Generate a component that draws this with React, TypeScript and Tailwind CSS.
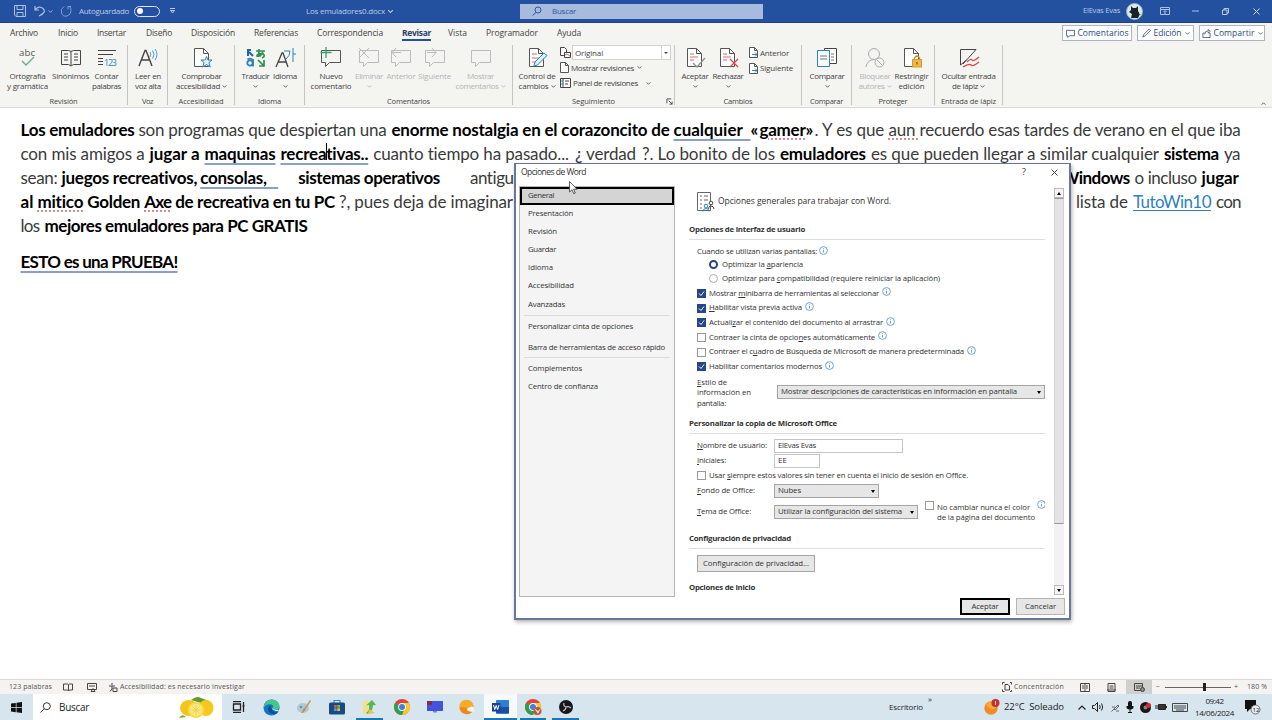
import React, { useLayoutEffect, useRef } from 'react';

interface FitProps {
  w: number;
  className?: string;
  children: React.ReactNode;
}

// Spreads or tightens the letters so the label takes exactly `w` pixels
const Fit: React.FC<FitProps> = ({ w, className = '', children }) => {
  const ref = useRef<HTMLSpanElement>(null);

  useLayoutEffect(() => {
    const el = ref.current;
    if (!el) return;
    el.style.letterSpacing = '0px';
    const natural = el.getBoundingClientRect().width;
    const count = (el.textContent || '').length;
    if (count > 0) el.style.letterSpacing = `${(w - natural) / count}px`;
  }, [w, children]);

  return (
    <span ref={ref} className={`inline-block whitespace-pre shrink-0 ${className}`}>
      {children}
    </span>
  );
};

// "&x" underlines the access key
const Mnemonic: React.FC<{ text: string; w: number; className?: string }> = ({ text, w, className }) => {
  const i = text.indexOf('&');
  return (
    <Fit w={w} className={className}>
      {i < 0 ? text : <>{text.slice(0, i)}<u>{text[i + 1]}</u>{text.slice(i + 2)}</>}
    </Fit>
  );
};

const Chevron: React.FC<{ className?: string }> = ({ className = '' }) => (
  <svg viewBox="0 0 6 4" className={`w-[5px] h-[3px] shrink-0 ${className}`} fill="none" stroke="currentColor" strokeWidth="1.1">
    <path d="M.5.5 3 3 5.500.5" />
  </svg>
);

const Svg: React.FC<{ children: React.ReactNode; className?: string; box?: string }> = ({ children, className = 'w-[22px] h-[22px]', box = '0 0 22 22' }) => (
  <svg viewBox={box} className={`shrink-0 ${className}`} fill="none" stroke="#444" strokeWidth="1">{children}</svg>
);

const Bubble = ({ stroke = '#555' }) => <path d="M1.500 3.500h19v12h-11l-4 4v-4h-4z" stroke={stroke} />;
const Page = () => <path d="M3.500 1.500h9l5 5v13h-14zM12.500 1.500v5h5" stroke="#555" fill="#fff" />;

const ICONS: Record<string, React.ReactNode> = {
  abc: (
    <Svg>
      <text x="2" y="9" fontSize="9.500" fill="#555" stroke="none" fontFamily="Open Sans" textLength="16">abc</text>
      <path d="M5 14l4 4 8-8" stroke="#5fae8d" strokeWidth="1.300" />
    </Svg>
  ),
  book: (
    <Svg>
      <path d="M1.500 3.500h7l2.500 1 2.500-1h7v14h-7l-2.500 1.500-2.500-1.500h-7zM11 4.500v14M4 7h4M4 10h4M4 13h4M14 7h4M14 10h4M14 13h4" />
    </Svg>
  ),
  count: (
    <Svg>
      <path d="M2 3.500h18M2 7.500h15M2 11.500h5M2 14.500h5M2 17.500h5" />
      <text x="8" y="19" fontSize="9" fill="#2b83b8" stroke="none" fontFamily="Open Sans" textLength="13">123</text>
    </Svg>
  ),
  read: (
    <Svg>
      <path d="M2 19 8 3.500h1L15 19M4.500 13h8" strokeWidth="1.400" />
      <path d="M13 5q1.500 2.500 0 5M15.500 3.500q3 4 0 8M18 2q4 5.500 0 11" stroke="#4a9bd0" />
    </Svg>
  ),
  check: (
    <Svg>
      <Page />
      <path d="m15.500 9.500 1.500 3.500h4l-3 2.500 1.200 4.500-3.700-2.500-3.700 2.500 1.200-4.500-3-2.500h4z" stroke="#2b83b8" fill="#dff0fa" />
    </Svg>
  ),
  translate: (
    <Svg>
      <circle cx="5" cy="16" r="2.700" stroke="#2b83b8" strokeWidth="1.800" />
      <path d="M8 12v7.500M2.500 12.500Q5 10.500 8 13" stroke="#2b83b8" strokeWidth="1.800" />
      <path d="M3 9V3h3M8 9 4 5" stroke="#1d65b0" strokeWidth="2" />
      <path d="M11 4h9M14 2q-1 7 2 7M18 5q-3 5-6 4 0-3 6-2 3 2-1 4M13 13l6 6M19 13v6h-5" stroke="#2a9150" strokeWidth="1.700" />
    </Svg>
  ),
  lang: (
    <Svg>
      <path d="M2 20 8 6h1L14 20M4 15h8" strokeWidth="1.300" />
      <path d="M10 4h6q0 5-4 8M19 1v14M19 7h3" stroke="#2b83b8" />
    </Svg>
  ),
  newComment: (
    <Svg><Bubble /><path d="M6 0v11M.5 5.500h11" stroke="#37a06b" strokeWidth="1.300" /></Svg>
  ),
  delComment: (
    <Svg><Bubble stroke="#bbb" /><path d="M1 1l10 10M11 1 1 11" stroke="#bbb" /></Svg>
  ),
  prevComment: (
    <Svg><Bubble stroke="#bbb" /><path d="M6 1 2 5.500 6 10M2 5.500h9" stroke="#bbb" /></Svg>
  ),
  nextComment: (
    <Svg><Bubble stroke="#bbb" /><path d="M8 1l4 4.500L8 10M12 5.500H3" stroke="#bbb" /></Svg>
  ),
  showComment: <Svg><Bubble stroke="#bbb" /></Svg>,
  track: (
    <Svg>
      <Page />
      <path d="M6 7h5M6 11h8M6 15h4" stroke="#d66a6a" />
      <path d="m8 19 1-4L18 6l3 2.500-9.500 9.500z" fill="#d8eefb" stroke="#2b83b8" />
    </Svg>
  ),
  accept: (
    <Svg><Page /><path d="M6 7h4M6 10h8M6 13h4" stroke="#d66a6a" /><path d="m9 16 4 4 8-9" stroke="#8c9a93" strokeWidth="1.500" /></Svg>
  ),
  reject: (
    <Svg><Page /><path d="M6 7h4M6 10h8M6 13h4" stroke="#d66a6a" /><path d="m13 12 8 8M21 12l-8 8" stroke="#d9444d" strokeWidth="1.200" /></Svg>
  ),
  compare: (
    <Svg>
      <path d="M8.500 1.500h12v15h-12z" fill="#fff" />
      <path d="M1.500 3.500h12v16h-12z" fill="#f5fbff" stroke="#2b83b8" />
      <path d="M4 9h7M4 12h7M15 7h3M15 10h3M15 13h3" stroke="#777" />
    </Svg>
  ),
  block: (
    <Svg>
      <circle cx="10" cy="7" r="5.500" stroke="#aaa" />
      <path d="M2 20q1-7 8-7.500" stroke="#aaa" />
      <circle cx="15.500" cy="15.500" r="4.500" fill="#f4f4f1" stroke="#aaa" /><path d="m12.500 12.500 6 6" stroke="#aaa" />
    </Svg>
  ),
  restrict: (
    <Svg>
      <Page />
      <path d="M13.500 13v-2q2.500-4 5 0v2" stroke="#b98a2e" strokeWidth="1.300" />
      <rect x="11.500" y="12.500" width="9" height="7.500" fill="#f6b73c" stroke="#d69a33" /><path d="M16 15v2.500" />
    </Svg>
  ),
  ink: (
    <Svg>
      <path d="M2.500 18V2.500H18L5 17M2.500 18l6-5" stroke="#444" />
      <path d="M9 15q4-4 5-2t7-3M5 20q6-4 8-2t8-3" stroke="#d9444d" strokeWidth="1.200" />
    </Svg>
  ),
};

interface BigProps {
  icon: string;
  box: string;
  l1: [string, number];
  l2?: [string, number];
  arrow?: boolean;
  off?: boolean;
}

const Big: React.FC<BigProps> = ({ icon, box, l1, l2, arrow, off }) => (
  <div className={`flex flex-col items-center shrink-0 pt-[2px] ${box} ${off ? 'text-[#b4b4b2]' : 'text-[#444]'}`}>
    {ICONS[icon]}
    <div className="h-[11px] mt-[1px] leading-[11px] flex justify-center"><Fit w={l1[1]}>{l1[0]}</Fit></div>
    <div className="h-[10px] leading-[10px] flex items-center justify-center gap-[2px]">
      {l2 && <Fit w={l2[1]}>{l2[0]}</Fit>}
      {arrow && <Chevron />}
    </div>
  </div>
);

const Group: React.FC<{ box: string; name: string; w: number; children: React.ReactNode; launcher?: boolean }> = ({ box, name, w, children, launcher }) => (
  <div className={`flex flex-col shrink-0 h-[60px] border-r border-[#c4c4c2] ${box}`}>
    <div className="flex h-[51px] shrink-0">{children}</div>
    <div className="relative h-[11px] shrink-0 flex justify-center leading-[11px] text-[7.5px] text-[#444] font-medium">
      <Fit w={w}>{name}</Fit>
      {launcher && (
        <Svg className="absolute right-[1px] top-[2px] w-[7px] h-[7px]" box="0 0 8 8"><path d="M1 6V1h5M3 3l4 4M7 4v3H4" /></Svg>
      )}
    </div>
  </div>
);

const TABS: [string, string, number][] = [
  ['Archivo', 'w-[48px]', 28], ['Inicio', 'w-[39px]', 20], ['Insertar', 'w-[49px]', 29], ['Diseño', 'w-[45px]', 26],
  ['Disposición', 'w-[63px]', 44], ['Referencias', 'w-[63px]', 44], ['Correspondencia', 'w-[85px]', 66], ['Revisar', 'w-[46px]', 29],
  ['Vista', 'w-[38px]', 19], ['Programador', 'w-[71px]', 52], ['Ayuda', 'w-[40px]', 24],
];

const TitleBar = () => (
  <div className="h-[23px] bg-[#2450a0] border-b border-[#1d4384] flex items-center text-[#b9cbea] text-[8px]">
    <Svg className="w-[12px] h-[12px] ml-[14px]" box="0 0 12 12"><path d="M.5.500h11v11H2L.5 10zM3 .5v4h6v-4M3 11V7.500h6V11" stroke="#a9c0e8" /></Svg>
    <Svg className="w-[11px] h-[12px] ml-[8px]" box="0 0 11 12"><path d="M1 1v4h4M1 5q4-5 8-1.500T5 11" stroke="#a9c0e8" strokeWidth="1.200" /></Svg>
    <Chevron className="ml-[3px]" />
    <Svg className="w-[12px] h-[12px] ml-[7px]" box="0 0 12 12"><path d="M4 1.500q-4 2.500-2.500 6.500t5.500 3T11 5.500 8 1.500M8 4.500v-3h3" stroke="#7f9fd6" /></Svg>
    <Fit w={50} className="ml-[7px]">Autoguardado</Fit>
    <div className="ml-[5px] w-[26px] h-[11px] rounded-full border border-[#dce6f7] flex items-center pl-[2px]"><div className="w-[6px] h-[6px] rounded-full bg-white"></div></div>
    <Svg className="w-[5px] h-[6px] ml-[10px]" box="0 0 5 6"><path d="M0 .5h5M.5 2.500 2.500 5l2-2.500z" stroke="#b9cbea" /></Svg>
    <Fit w={79} className="ml-[131px]">Los emuladores0.docx</Fit>
    <Chevron className="ml-[3px] scale-125" />
    <div className="ml-[127px] w-[243px] h-[15px] bg-[#a7bbdf] flex items-center text-[#2f569c]">
      <Svg className="w-[10px] h-[10px] ml-[12px]" box="0 0 10 10"><circle cx="6" cy="4" r="3" stroke="#2f569c" /><path d="M4 6.500.5 9.500" stroke="#2f569c" /></Svg>
      <Fit w={24} className="ml-[10px]">Buscar</Fit>
    </div>
    <Fit w={37} className="ml-[320px] text-[7.5px]">ElEvas Evas</Fit>
    <Svg className="w-[17px] h-[17px] ml-[6px]" box="0 0 17 17">
      <circle cx="8.500" cy="8.500" r="8" fill="#dcebe6" stroke="#8fb3cf" />
      <path d="M5 3l2 2h3l2-2v5l2 3-2 4H5l1-4-3-2 2-2z" fill="#17222e" stroke="none" /><path d="M13 10l2 2" stroke="#d5b94c" />
    </Svg>
    <Svg className="w-[10px] h-[8px] ml-[17px]" box="0 0 10 8"><path d="M.5.500h9v7h-9zM.5 2.500h9M5 7V4M3.500 5 5 3.500 6.500 5" stroke="#a9c0e8" /></Svg>
    <Svg className="w-[7px] h-[8px] ml-[22px]" box="0 0 7 8"><path d="M0 4h7" stroke="#a9c0e8" /></Svg>
    <Svg className="w-[7px] h-[7px] ml-[23px]" box="0 0 7 7"><path d="M.5 2h4.500v4.500H.5zM2 2V.5h4.500V5H5" stroke="#b9cbea" /></Svg>
    <Svg className="w-[7px] h-[7px] ml-[24px]" box="0 0 7 7"><path d="m.5.500 6 6M6.500.5l-6 6" stroke="#d3dff3" /></Svg>
  </div>
);

const TopButton: React.FC<{ box: string; text: string; w: number; icon: string; arrow?: boolean }> = ({ box, text, w, icon, arrow }) => (
  <div className={`h-[16px] bg-white border border-[#a9b3c9] flex items-center justify-center gap-[3px] text-[8.5px] font-medium text-[#2a4a86] ${box}`}>
    <Svg className="w-[9px] h-[9px]" box="0 0 10 10"><path d={icon} stroke="#4a5d86" /></Svg>
    <Fit w={w}>{text}</Fit>
    {arrow && <Chevron />}
  </div>
);

const SmallRow: React.FC<{ text: string; w: number; arrow?: string; children: React.ReactNode }> = ({ text, w, arrow, children }) => (
  <div className="flex items-center h-[15.500px] gap-[2px] text-[#444]">
    {children}
    <Fit w={w}>{text}</Fit>
    {arrow && <Chevron className={arrow} />}
  </div>
);

const PageIcon = ({ tint = '#555' }) => (
  <Svg className="w-[9px] h-[11px]" box="0 0 9 11"><path d="M.5.500h5l3 3v7h-8zM5.500.5v3h3" fill="#fff" stroke="#555" />{tint !== '#555' && <path d="M3 7.500h5M6 5.500l2 2-2 2" stroke={tint} />}</Svg>
);

const Ribbon = () => (
  <div className="h-[85px] bg-[#f4f4f1] border-b border-[#dcdcda] text-[8px]">
    <div className="h-[22px] flex items-start justify-between">
      <div className="flex pl-[10px] text-[8.5px] text-[#444] leading-[20px]">
        {TABS.map(([name, box, w]) => (
          <div key={name} className={`h-[19px] ${box}`}>
            <div className={name === 'Revisar' ? 'w-[29px] h-[18px] border-b-2 border-[#2450a0] font-bold text-[#2b3f6b]' : ''}><Fit w={w}>{name}</Fit></div>
          </div>
        ))}
      </div>
      <div className="flex gap-[5px] pt-[2px] pr-[7px]">
        <TopButton box="w-[70px]" text="Comentarios" w={51} icon="M.5 1.500h9v6H4l-2 2v-2H.5z" />
        <TopButton box="w-[57px]" text="Edición" w={28} icon="m1 9 1-3 6-6 1.500 1.500-6 6z" arrow />
        <TopButton box="w-[66px]" text="Compartir" w={41} icon="M1 4.500h2M7 4.500h2v5H1v-5M3 6q0-4 4-4V.5l2 2-2 2V3" arrow />
      </div>
    </div>
    <div className="flex">
      <Group box="w-[128px]" name="Revisión" w={28}>
        <Big box="w-[49px] ml-[3px]" icon="abc" l1={['Ortografía', 36]} l2={['y gramática', 41]} />
        <Big box="w-[37px]" icon="book" l1={['Sinónimos', 37]} />
        <Big box="w-[35px]" icon="count" l1={['Contar', 24]} l2={['palabras', 29]} />
      </Group>
      <Group box="w-[40px]" name="Voz" w={11}>
        <Big box="w-[40px]" icon="read" l1={['Leer en', 26]} l2={['voz alta', 26]} />
      </Group>
      <Group box="w-[67px]" name="Accesibilidad" w={45}>
        <Big box="w-[67px]" icon="check" l1={['Comprobar', 40]} l2={['accesibilidad', 44]} arrow />
      </Group>
      <Group box="w-[70px]" name="Idioma" w={23}>
        <Big box="w-[31px] ml-[5px]" icon="translate" l1={['Traducir', 28]} arrow />
        <Big box="w-[28px]" icon="lang" l1={['Idioma', 24]} arrow />
      </Group>
      <Group box="w-[208px]" name="Comentarios" w={43}>
        <Big box="w-[46px] ml-[3px]" icon="newComment" l1={['Nuevo', 23]} l2={['comentario', 41]} />
        <Big box="w-[30px]" icon="delComment" l1={['Eliminar', 28]} arrow off />
        <Big box="w-[34px]" icon="prevComment" l1={['Anterior', 29]} off />
        <Big box="w-[33px]" icon="nextComment" l1={['Siguiente', 33]} off />
        <Big box="w-[59px]" icon="showComment" l1={['Mostrar', 27]} l2={['comentarios', 43]} arrow off />
      </Group>
      <Group box="w-[162px]" name="Seguimiento" w={43} launcher>
        <Big box="w-[46px] ml-[1px]" icon="track" l1={['Control de', 37]} l2={['cambios', 30]} arrow />
        <div className="flex flex-col">
          <div className="flex items-center h-[15px] shrink-0">
            <Svg className="w-[11px] h-[11px]" box="0 0 11 11"><path d="M.5.500h4l2 2v6h-6z" fill="#fff" /><path d="M4.500 5.500h6v5h-6z" fill="#fff" /><path d="M5 8l2-1 3 2" stroke="#d66a6a" /></Svg>
            <div className="ml-[1px] w-[99px] h-[15px] bg-white border border-[#d2d2d0] flex items-center text-[#444]">
              <Fit w={28} className="ml-[2px]">Original</Fit>
              <div className="ml-auto h-full w-[9px] border-l border-[#d2d2d0] flex items-center justify-center"><div className="border-x-[2px] border-x-transparent border-t-[2px] border-t-[#444]"></div></div>
            </div>
          </div>
          <SmallRow text="Mostrar revisiones" w={63} arrow="ml-[1px]"><PageIcon /></SmallRow>
          <SmallRow text="Panel de revisiones" w={65} arrow="ml-[6px]">
            <Svg className="w-[11px] h-[10px]" box="0 0 11 10"><path d="M.5.500h10v9H.5zM3 .5v9M5 3h4M5 6h3" fill="#fff" /><path d="M1 3h2M1 6h2" stroke="#2b83b8" /></Svg>
          </SmallRow>
        </div>
      </Group>
      <Group box="w-[127px]" name="Cambios" w={29}>
        <Big box="w-[34px] ml-[3px]" icon="accept" l1={['Aceptar', 27]} arrow />
        <Big box="w-[32px]" icon="reject" l1={['Rechazar', 31]} arrow />
        <div className="flex flex-col pl-[5px]">
          <SmallRow text="Anterior" w={29}><PageIcon tint="#2b83b8" /></SmallRow>
          <SmallRow text="Siguiente" w={33}><PageIcon tint="#2b83b8" /></SmallRow>
        </div>
      </Group>
      <Group box="w-[50px]" name="Comparar" w={33}>
        <Big box="w-[50px]" icon="compare" l1={['Comparar', 35]} arrow />
      </Group>
      <Group box="w-[83px]" name="Proteger" w={29}>
        <Big box="w-[38px] ml-[4px]" icon="block" l1={['Bloquear', 31]} l2={['autores', 26]} arrow off />
        <Big box="w-[35px]" icon="restrict" l1={['Restringir', 34]} l2={['edición', 26]} />
      </Group>
      <Group box="w-[68px]" name="Entrada de lápiz" w={55}>
        <Big box="w-[67px]" icon="ink" l1={['Ocultar entrada', 54]} l2={['de lápiz', 26]} arrow />
      </Group>
      <div className="ml-auto self-end pr-[6px] text-[#444]"><Chevron className="rotate-180" /></div>
    </div>
  </div>
);

const BLUE = 'underline decoration-2 decoration-[#8a9fcb] underline-offset-[3px]';
const RED = 'underline decoration-dotted decoration-2 decoration-[#d9888b] underline-offset-[3px]';

// [text, width, style, gap after]
type Run = [string, number, string, number];

const LINES: Run[][] = [
  [
    ['Los emuladores', 114, 'font-bold text-black', 4], ['son programas que despiertan una', 248, '', 5],
    ['enorme nostalgia en el corazoncito de', 278, 'font-bold text-black', 4],
    ['cualquier  ', 77, `font-bold text-black ${BLUE}`, 0], ['«', 9, 'font-bold text-black', 0],
    ['gamer', 46, `font-bold text-black ${RED}`, 0], ['»', 9, 'font-bold text-black', 0], ['. Y es que ', 74, '', 0],
    ['aun ', 31, RED, 0], ['recuerdo esas tardes de verano en el que iba', 321, '', 0],
  ],
  [
    ['con mis amigos a', 124, '', 5], ['jugar a', 50, 'font-bold text-black', 5], ['maquinas', 71, `font-bold text-black ${BLUE}`, 5],
    ['recreativas..', 88, `font-bold text-black ${BLUE}`, 5], ['cuanto tiempo ha pasado...', 196, '', 6],
    ['¿ verdad', 61, BLUE, 6], ['?. Lo bonito de los', 133, '', 5], ['emuladores', 86, 'font-bold text-black', 5],
    ['es que pueden llegar a similar cualquier', 288, '', 5], ['sistema', 55, 'font-bold text-black', 5], ['ya', 16, '', 0],
  ],
  [
    ['sean:', 37, '', 4], ['juegos recreativos,', 136, 'font-bold text-black', 3], ['consolas,   ', 78, `font-bold text-black ${BLUE}`, 20],
    ['sistemas operativos', 142, 'font-bold text-black', 30], ['antigu', 44, '', 548], ['Windows', 68, 'font-bold text-black', 5],
    ['o incluso', 62, '', 5], ['jugar', 37, 'font-bold text-black', 0],
  ],
  [
    ['al ', 17, 'font-bold text-black', 0], ['mitico', 46, `font-bold text-black ${RED}`, 4], ['Golden', 53, 'font-bold text-black', 4],
    ['Axe', 27, `font-bold text-black ${RED}`, 4], ['de recreativa en tu PC', 160, 'font-bold text-black', 4],
    ['?, pues deja de imaginar', 174, '', 546], ['la', 12, '', 5], ['lista de', 52, '', 5],
    ['TutoWin10', 78, 'text-[#2f7fc1] underline underline-offset-2', 5], ['con', 25, '', 0],
  ],
  [['los', 19, '', 5], ['mejores emuladores para PC GRATIS', 263, 'font-bold text-black', 0]],
];

const Gap: React.FC<{ px: number }> = ({ px }) => <span className="shrink-0" style={{ width: px }}></span>;

const Document = () => (
  <div className="relative h-[571px] bg-white pl-[20.500px] pt-[9.500px] overflow-hidden font-[Lato,sans-serif] text-[17px] leading-[24px] text-[#3a3a3a]">
    {LINES.map((line, i) => (
      <div key={i} className="flex h-[24px]">
        {line.map(([text, w, style, gap], j) => (
          <React.Fragment key={j}>
            <Fit w={w} className={style}>{text}</Fit>
            {gap > 0 && <Gap px={gap} />}
          </React.Fragment>
        ))}
      </div>
    ))}
    <div className="mt-[12px] h-[24px]">
      <Fit w={157} className={`font-bold text-black ${BLUE}`}>ESTO es una PRUEBA!</Fit>
    </div>
    <div className="absolute left-[326px] top-[35px] w-px h-[17px] bg-black"></div>
  </div>
);

const Info = () => (
  <svg viewBox="0 0 9 9" className="w-[9px] h-[9px] shrink-0 mb-[3px]" fill="none" stroke="#5d9bc9" strokeWidth=".9">
    <circle cx="4.500" cy="4.500" r="3.900" /><path d="M4.500 4v2.500M4.500 2.300v.9" />
  </svg>
);

const Box: React.FC<{ on?: boolean }> = ({ on }) => (
  <div className={`w-[9px] h-[9px] shrink-0 border flex items-center justify-center ${on ? 'bg-[#23468c] border-[#23468c]' : 'bg-white border-[#999]'}`}>
    {on && <svg viewBox="0 0 7 7" className="w-[7px] h-[7px]" fill="none" stroke="#fff" strokeWidth="1"><path d="m1 3.500 2 2 3-4" /></svg>}
  </div>
);

const Select: React.FC<{ box: string; text: string; w: number }> = ({ box, text, w }) => (
  <div className={`h-[14px] shrink-0 bg-[#e6e6e6] border border-[#a5a5a5] flex items-center justify-between pl-[3px] pr-[3px] ${box}`}>
    <Fit w={w}>{text}</Fit>
    <div className="border-x-[2.5px] border-x-transparent border-t-[3px] border-t-black"></div>
  </div>
);

const Title: React.FC<{ text: string; w: number }> = ({ text, w }) => (
  <div className="h-[17px] border-b border-[#dedede] leading-[12px] font-bold text-[#333]"><Fit w={w}>{text}</Fit></div>
);

const CHECKS: [string, number, boolean][] = [
  ['Mostrar &minibarra de herramientas al seleccionar', 170, true],
  ['&Habilitar vista previa activa', 93, true],
  ['Actuali&zar el contenido del documento al arrastrar', 174, true],
  ['Contraer la cinta de opcio&nes automáticamente', 166, false],
  ['Contraer el c&uadro de Búsqueda de Microsoft de manera predeterminada', 255, false],
  ['Habilitar comentarios modernos', 113, true],
];

const NAV: [string, number, string][] = [
  ['General', 26, 'h-[18px] border-2 border-black bg-[#d4d4d4] pl-[6px]'],
  ['Presentación', 45, 'h-[18px] pl-[8px]'], ['Revisión', 29, 'h-[18px] pl-[8px]'], ['Guardar', 28, 'h-[18px] pl-[8px]'],
  ['Idioma', 25, 'h-[18px] pl-[8px]'], ['Accesibilidad', 46, 'h-[18px] pl-[8px]'], ['Avanzadas', 37, 'h-[21px] mx-[4px] pl-[4px] border-b border-[#dcdcdc]'],
  ['Personalizar cinta de opciones', 105, 'h-[22px] pl-[8px]'],
  ['Barra de herramientas de acceso rápido', 137, 'h-[20px] mx-[4px] pl-[4px] border-b border-[#dcdcdc]'],
  ['Complementos', 54, 'h-[21px] pl-[8px]'], ['Centro de confianza', 70, 'h-[16px] pl-[8px]'],
];

const OptionsDialog = () => (
  <div className="absolute left-[514px] top-[163px] w-[557px] h-[457px] bg-white border-2 border-t border-[#6b7695] shadow-[1px_2px_4px_rgba(0,0,0,0.3)] flex flex-col text-[7.8px] text-[#333]">
    <div className="h-[22px] flex items-start text-[8.5px] leading-[16px] shrink-0">
      <Fit w={65} className="ml-[5px]">Opciones de Word</Fit>
      <span className="ml-auto mr-[25px] text-[9px]">?</span>
      <Svg className="w-[7px] h-[7px] mt-[5px] mr-[11px]" box="0 0 7 7"><path d="m.5.500 6 6M6.500.5l-6 6" /></Svg>
    </div>
    <div className="flex h-[411px] shrink-0">
      <div className="ml-[3px] w-[156px] bg-[#f4f4f4] border border-[#b5b5b5]">
        {NAV.map(([text, w, box]) => (
          <div key={text} className={`flex items-center ${box}`}><Fit w={w}>{text}</Fit></div>
        ))}
      </div>
      <div className="ml-[14px] w-[356px] h-full overflow-hidden">
        <div className="h-[37px] flex items-center pl-[7px] text-[8.5px] gap-[3px] pb-[7px]">
          <Svg className="w-[19px] h-[21px]" box="0 0 19 21">
            <path d="M1.500 1.500h13v18h-13z" stroke="#666" fill="#fff" /><path d="M4 5h2M8 5h4M4 9h2M8 9h4M4 13h2M4 17h2" stroke="#666" />
            <circle cx="15" cy="12" r="1.800" fill="#fff" /><path d="M12.500 18q0-3 2.500-3t3 3" />
            <circle cx="10" cy="15" r="1.800" stroke="#2b83b8" fill="#fff" /><path d="M7 20.500q0-3 3-3t3 3" stroke="#2b83b8" />
          </Svg>
          <Fit w={173}>Opciones generales para trabajar con Word.</Fit>
        </div>
        <Title text="Opciones de interfaz de usuario" w={116} />
        <div className="pl-[8px] pt-[4px]">
          <div className="flex items-center h-[14px] gap-[2px] pt-[2px]"><Fit w={120}>Cuando se utilizan varias pantallas:</Fit><Info /></div>
          <div className="flex items-center h-[13px] gap-[4px] pl-[12px]">
            <div className="w-[9px] h-[9px] rounded-full border-[2.5px] border-[#2b447c] bg-white"></div><Mnemonic text="Optimizar la &apariencia" w={81} />
          </div>
          <div className="flex items-center h-[15px] gap-[4px] pl-[12px]">
            <div className="w-[9px] h-[9px] rounded-full border border-[#aaa] bg-white"></div><Mnemonic text="Optimizar para &compatibilidad (requiere reiniciar la aplicación)" w={218} />
          </div>
          {CHECKS.map(([text, w, on]) => (
            <div key={text} className="flex items-center h-[14.7px] gap-[3px]"><Box on={on} /><Mnemonic text={text} w={w} /><Info /></div>
          ))}
          <div className="flex items-center h-[36px]">
            <div className="w-[80px] leading-[10.500px] pt-[1px]">
              <Mnemonic text="&Estilo de" w={30} /><br /><Fit w={54}>información en</Fit><br /><Fit w={29}>pantalla:</Fit>
            </div>
            <Select box="w-[268px]" text="Mostrar descripciones de características en información en pantalla" w={236} />
          </div>
        </div>
        <div className="pt-[7px]"><Title text="Personalizar la copia de Microsoft Office" w={148} /></div>
        <div className="pl-[8px] pt-[4px]">
          <div className="flex items-center h-[15px]">
            <div className="w-[77px]"><Mnemonic text="&Nombre de usuario:" w={70} /></div>
            <div className="w-[129px] h-[14px] border border-[#c4c4c4] flex items-center pl-[3px]"><Fit w={38}>ElEvas Evas</Fit></div>
          </div>
          <div className="flex items-center h-[15px]">
            <div className="w-[77px]"><Mnemonic text="&Iniciales:" w={29} /></div>
            <div className="w-[46px] h-[14px] border border-[#c4c4c4] flex items-center pl-[3px]"><Fit w={9}>EE</Fit></div>
          </div>
          <div className="flex items-center h-[15px] gap-[3px]"><Box /><Mnemonic text="Usar &siempre estos valores sin tener en cuenta el inicio de sesión en Office." w={259} /></div>
          <div className="flex items-center h-[16px]">
            <div className="w-[77px]"><Mnemonic text="&Fondo de Office:" w={58} /></div>
            <Select box="w-[105px]" text="Nubes" w={23} />
          </div>
          <div className="flex items-center h-[26px]">
            <div className="w-[77px] shrink-0"><Mnemonic text="&Tema de Office:" w={54} /></div>
            <Select box="w-[144px]" text="Utilizar la configuración del sistema" w={124} />
            <div className="ml-[7px] mb-[13px]"><Box /></div>
            <div className="ml-[3px] leading-[10.500px] w-[100px] shrink-0"><Fit w={93}>No cambiar nunca el color</Fit><br /><Fit w={98}>de la página del documento</Fit></div>
            <div className="mb-[12px]"><Info /></div>
          </div>
        </div>
        <div className="pt-[7px]"><Title text="Configuración de privacidad" w={102} /></div>
        <div className="ml-[8px] mt-[6px] w-[118px] h-[17px] bg-[#e6e6e6] border border-[#a5a5a5] flex items-center justify-center"><Fit w={106}>Configuración de privacidad...</Fit></div>
        <div className="pt-[10px] leading-[11px] font-bold"><Fit w={66}>Opciones de inicio</Fit></div>
      </div>
      <div className="ml-[9px] mt-[2px] w-[10px] h-[407px] bg-[#f2f2f2] flex flex-col justify-between">
        <div>
          <div className="h-[10px] bg-[#f4f4f4] border border-[#bbb] flex items-center justify-center"><div className="border-x-[2.5px] border-x-transparent border-b-[3px] border-b-black"></div></div>
          <div className="h-[326px] bg-[#e3e3e3] border border-t-[#999] border-b-[#999] border-x-[#d5d5d5]"></div>
        </div>
        <div className="h-[10px] bg-[#f4f4f4] border border-[#bbb] flex items-center justify-center"><div className="border-x-[2.5px] border-x-transparent border-t-[3px] border-t-black"></div></div>
      </div>
    </div>
    <div className="flex justify-end gap-[6px] pr-[4px] pt-[1px]">
      <div className="w-[50px] h-[17px] bg-[#e6e6e6] border-2 border-black flex items-center justify-center"><Fit w={27}>Aceptar</Fit></div>
      <div className="w-[49px] h-[17px] bg-[#e6e6e6] border border-[#b5b5b5] flex items-center justify-center"><Fit w={31}>Cancelar</Fit></div>
    </div>
  </div>
);

const StatusBar = () => (
  <div className="h-[15px] bg-[#f4f3f1] border-t border-[#d8d8d6] flex items-center text-[7px] text-[#555]">
    <Fit w={43} className="ml-[9px]">123 palabras</Fit>
    <Svg className="w-[10px] h-[9px] ml-[11px]" box="0 0 10 9"><path d="M.5 1h4l1 .5 1-.5h3v6h-3l-1 1-1-1h-4zM5.500 1.500V8" /></Svg>
    <Svg className="w-[10px] h-[9px] ml-[14px]" box="0 0 10 9"><path d="M.5.500h9v6h-9zM2 3h6M4 8.500l2-3 2 3z" /></Svg>
    <Svg className="w-[10px] h-[10px] ml-[11px]" box="0 0 10 10"><path d="M4 1v2M1 4h6M4 4v3L2 9.500M5 6h4v3.500H5z" /></Svg>
    <Fit w={125} className="ml-[2px]">Accesibilidad: es necesario investigar</Fit>
    <Svg className="w-[10px] h-[10px] ml-auto" box="0 0 10 10"><path d="M3 2.500h3l1.500 1.500v4H3zM.5 2.500v-2h2M8 .5h1.500v2M9.500 8v1.500H8M2.500 9.500h-2v-2" /></Svg>
    <Fit w={50} className="ml-[2px]">Concentración</Fit>
    <Svg className="w-[10px] h-[9px] ml-[16px]" box="0 0 10 9"><path d="M.5.500h9v8h-9zM5 .5v8M2 3h2M2 5h2M6 3h2M6 5h2" /></Svg>
    <Svg className="w-[9px] h-[9px] ml-[17px]" box="0 0 9 9"><path d="M1 .5h7v8H1zM2.500 3h4M2.500 5h4M0 7h9" /></Svg>
    <div className="ml-[10px] w-[26px] h-[14px] bg-[#cfcfce] flex items-center justify-center"><Svg className="w-[11px] h-[9px]" box="0 0 11 9"><path d="M.5.500h8v7h-8zM2 3h6M2 5h4" /><circle cx="8.500" cy="6.500" r="2" fill="#888" /></Svg></div>
    <span className="ml-[4px] w-[6px]">−</span>
    <div className="ml-[3px] w-[66px] h-[8px] flex items-center">
      <div className="w-[38px] h-px bg-[#666]"></div><div className="w-[3px] h-[8px] bg-[#222]"></div><div className="w-[25px] h-px bg-[#666]"></div>
    </div>
    <span className="ml-[3px] w-[6px]">+</span>
    <Fit w={20} className="ml-[7px] mr-[5px]">180 %</Fit>
  </div>
);

const Chrome = ({ extra = false }) => (
  <svg viewBox="0 0 18 18" className="w-[18px] h-[18px]">
    <circle cx="9" cy="9" r="8" fill="#e04437" />
    <path d="M9 9 2.100 5A8 8 0 0 0 9 17l3.500-6z" fill="#2f9e4f" />
    <path d="M9 9h3.500L9 17A8 8 0 0 0 16 5H9z" fill="#f9c731" />
    <circle cx="9" cy="9" r="3.900" fill="#fff" /><circle cx="9" cy="9" r="3" fill="#3f7de0" />
    {extra && <><circle cx="13.500" cy="13" r="4" fill="#b9563d" /><path d="M10 10l4 3 3-3-3 6z" fill="#f1dccb" /></>}
  </svg>
);

const TASKS: { icon: React.ReactNode; state?: string }[] = [
  { icon: <Svg className="w-[13px] h-[12px]" box="0 0 13 12"><path d="M1 .5h8M1 11.500h8M1.500 3h7v6h-7zM11.500 1v10M10.500 5h2" stroke="#222" strokeWidth="1.300" /></Svg> },
  {
    icon: (
      <svg viewBox="0 0 18 18" className="w-[17px] h-[17px]">
        <circle cx="9" cy="9" r="8.500" fill="#1275c8" />
        <path d="M1 7Q4 0 10 .5q7 1 7.500 7 0 4-5 4-3 0-2-2 1-4-3-4Q3 5.500 1 9z" fill="#42c88c" />
        <path d="M7 7q-4 5 1 8 4 2 8-1-7 1-7-6z" fill="#0d4f9c" /><path d="M9 8q0 5 8 5l-1-2q-4 1-6-1z" fill="#dbe7ef" />
      </svg>
    ),
  },
  { icon: <svg viewBox="0 0 16 16" className="w-[16px] h-[16px]"><ellipse cx="7" cy="9" rx="6" ry="5" fill="#b7c6cc" /><circle cx="5" cy="8" r="1.300" fill="#4c9cd0" /><circle cx="8" cy="11" r="1.300" fill="#74b35a" /><path d="M5 14 14 1l1 1-8 12z" fill="#b9975c" /></svg> },
  { icon: <svg viewBox="0 0 16 16" className="w-[16px] h-[16px]"><path d="M5 4V1.500h6V4" fill="none" stroke="#2b8bd0" strokeWidth="1.200" /><rect x="0" y="3.500" width="16" height="12" rx="1.500" fill="#174a84" /><path d="M5 6h2.700v2.700H5z" fill="#e8583c" /><path d="M8.300 6H11v2.700H8.300z" fill="#7cba3d" /><path d="M5 9.300h2.700V12H5z" fill="#3aa5e0" /><path d="M8.300 9.300H11V12H8.300z" fill="#f6bd2e" /></svg> },
  { icon: <svg viewBox="0 0 16 16" className="w-[16px] h-[16px]"><path d="M2 2l5-1v14H2z" fill="#f3e08e" /><path d="M5 14q4-3 3-8L5 6.500 11 1l4 5-3 .2q0 5-5 8.800z" fill="#57b947" /><path d="M8 10l6 4-7 1z" fill="#e7c04e" /></svg>, state: 'open' },
  { icon: <Chrome /> },
  { icon: <svg viewBox="0 0 16 14" className="w-[16px] h-[14px]"><path d="M0 1h16v10H0z" fill="#4552dc" /><path d="M0 1h5v4H0z" fill="#7b2b55" /><path d="M6 11h4v1.500H6z" fill="#7d86c4" /></svg> },
  { icon: <svg viewBox="0 0 16 16" className="w-[16px] h-[16px]"><circle cx="7.500" cy="8" r="7.300" fill="#f5ad27" /><path d="M1 8a7 7 0 0 0 12 5L8 9z" fill="#e9891f" /><path d="M8 11q0-3 3-2.500 1-2 4 0v4q-5 1-7-1.500z" fill="#f4f3ee" /></svg> },
  { icon: <svg viewBox="0 0 17 16" className="w-[17px] h-[16px]"><rect x="4" y="1" width="13" height="14" rx="1" fill="#2f7fd6" /><path d="M4 8h13v6H4z" fill="#1b4fa3" /><rect x="0" y="4" width="8.500" height="8.500" fill="#17439a" /><path d="m1.500 6 1.300 4.500L4.200 6.500l1.400 4L7 6" fill="none" stroke="#fff" strokeWidth="1" /></svg>, state: 'active' },
  { icon: <Chrome extra />, state: 'open' },
  { icon: <svg viewBox="0 0 14 14" className="w-[14px] h-[14px]"><circle cx="7" cy="7" r="7" fill="#16171a" /><path d="M7 7Q4 6 5 3M7 7q3-1 5 1M7 7q0 3-3 4" fill="none" stroke="#c9c9cc" strokeWidth="1.100" /></svg>, state: 'open' },
];

const Taskbar = () => (
  <div className="h-[26px] bg-[#d7e5ee] flex items-center text-[#222]">
    <div className="w-[33px] flex justify-center"><svg viewBox="0 0 11 11" className="w-[11px] h-[11px]" fill="#111"><path d="M0 1.500 4.800.9v4.300H0zM5.500.8 11 0v5.200H5.500zM0 5.900h4.800v4.300L0 9.500zM5.500 5.900H11V11l-5.500-.8z" /></svg></div>
    <div className="w-[189px] h-[26px] bg-white flex items-center">
      <Svg className="w-[11px] h-[11px] ml-[7px]" box="0 0 11 11"><circle cx="6.800" cy="4.200" r="3.500" stroke="#333" /><path d="M4.300 6.700.5 10.500" stroke="#333" /></Svg>
      <Fit w={30} className="ml-[8px] text-[10px]">Buscar</Fit>
      <svg viewBox="0 0 35 23" className="w-[35px] h-[23px] ml-auto mr-[8px]">
        <path d="M12 4q6-5 10-2l8 3-8 2z" fill="#5f9a32" />
        <ellipse cx="10" cy="12" rx="9" ry="8" fill="#f1c61c" /><ellipse cx="27" cy="12" rx="7.500" ry="8" fill="#f5c81b" />
        <circle cx="17" cy="14" r="8" fill="#f7dc4a" /><circle cx="17" cy="14" r="6" fill="#fbea86" />
        <path d="M17 9v10M12 14h10M13.500 10.500l7 7M20.500 10.500l-7 7" stroke="#eecb3c" strokeWidth=".8" /><path d="M0 22q3-5 7-1z" fill="#76a53b" />
      </svg>
    </div>
    <div className="w-[360px] h-full grid grid-cols-11">
      {TASKS.map((t, i) => (
        <div key={i} className={`relative flex items-center justify-center ${t.state === 'active' ? 'bg-[#f7fafc]' : ''}`}>
          {t.icon}
          {t.state && <div className={`absolute bottom-0 h-[2px] bg-[#1c78b4] ${t.state === 'active' ? 'inset-x-0' : 'inset-x-[3px]'}`}></div>}
        </div>
      ))}
    </div>
    <Fit w={34} className="ml-[307px] text-[8px]">Escritorio</Fit>
    <span className="ml-[5px] mb-[17px] w-[6px] text-[8px]">»</span>
    <svg viewBox="0 0 16 16" className="w-[16px] h-[16px] ml-[50px]"><circle cx="7" cy="9" r="6.700" fill="#f08a24" /><path d="M2 6q3-5 7-3l3 6q-5 3-10-3z" fill="#f8a93c" /><circle cx="11.500" cy="4" r="4" fill="#c93029" /><path d="M11.500 2v4" stroke="#fff" strokeWidth=".8" /></svg>
    <Fit w={60} className="ml-[4px] text-[9.5px]">22°C  Soleado</Fit>
    <Svg className="w-[8px] h-[5px] ml-[14px]" box="0 0 8 5"><path d="M.5 4.500 4 1l3.500 3.500" stroke="#222" strokeWidth="1.200" /></Svg>
    <Svg className="w-[11px] h-[10px] ml-[6px]" box="0 0 11 10"><path d="M.5 3.500h2l3-3v9l-3-3h-2zM7.500 3q1.500 2 0 4M9.500 1.500q2.500 3.500 0 7" stroke="#222" /></Svg>
    <Svg className="w-[9px] h-[9px] ml-[8px]" box="0 0 9 9"><path d="M.5 8.500 4 5M3 6l4-4 1 1-4 4zM1 4h3M5 8h3" stroke="#666" /></Svg>
    <svg viewBox="0 0 8 12" className="w-[8px] h-[12px] ml-[6px]" fill="#111"><rect x="2" width="4" height="7" rx="2" /><path d="M.5 5v1q0 2 3 2.500V11H2v1h4v-1H4.500V8.500q3-.5 3-2.500V5z" /></svg>
    <svg viewBox="0 0 11 11" className="w-[11px] h-[11px] ml-[6px]"><circle cx="5.500" cy="5.500" r="5.500" fill="#1c1517" /><circle cx="5.500" cy="5.500" r="2" fill="#8b7f80" /><circle cx="8.500" cy="3.500" r="2.500" fill="#d22b2b" /></svg>
    <Svg className="w-[12px] h-[8px] ml-[4px]" box="0 0 12 8"><path d="M3.500 1.500h7v5h-7z" fill="#333" stroke="#222" /><path d="M0 3h3M0 5h3M11.500 3v2" stroke="#222" /></Svg>
    <Svg className="w-[16px] h-[9px] ml-[5px]" box="0 0 16 9"><path d="M.5.500h15v8H.5zM2 3h12M2 5h12M4 7h8" stroke="#333" strokeWidth=".9" /></Svg>
    <div className="ml-[7px] w-[39px] h-[24px] text-[8px] leading-[12px] flex flex-col items-center"><Fit w={18}>09:42</Fit><Fit w={39}>14/06/2024</Fit></div>
    <svg viewBox="0 0 17 16" className="w-[17px] h-[16px] ml-[10px]"><path d="M1 1h11v9H6l-3 3v-3H1z" fill="#111" /><circle cx="11.500" cy="10.500" r="4.500" fill="#e6edf2" stroke="#555" strokeWidth=".8" /><text x="8.500" y="13" fontSize="6" fill="#111" fontFamily="Open Sans">12</text></svg>
  </div>
);

export default function App() {
  return (
    <div className="relative w-[1272px] h-[720px] overflow-hidden bg-white font-['Open_Sans',sans-serif]">
      <TitleBar />
      <Ribbon />
      <Document />
      <StatusBar />
      <Taskbar />
      <OptionsDialog />
      <svg viewBox="0 0 9 14" className="absolute left-[569px] top-[181px] w-[9px] h-[14px]" fill="#fff" stroke="#333" strokeWidth=".8">
        <path d="M.5.500v10.500L3 8.700l1.800 4L6.300 12 4.600 8.200H8z" />
      </svg>
    </div>
  );
}
